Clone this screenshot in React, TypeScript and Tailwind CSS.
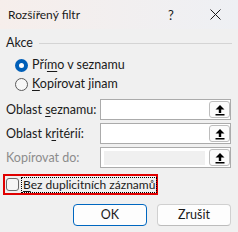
import React from "react";

function UpArrow() {
  return (
    <svg width="10" height="12" viewBox="0 0 10 12" className="block">
      <path d="M5 1 L9.5 5.5 L6.2 5.5 L6.2 9 L3.8 9 L3.8 5.5 L0.5 5.5 Z" fill="#000" />
      <rect x="0.5" y="10" width="9" height="1.5" fill="#000" />
    </svg>
  );
}

function RefField({ label, hot, rest, before, disabled }: { label?: string; before: string; hot: string; rest: string; disabled?: boolean }) {
  return (
    <div className="flex items-center h-[21px]">
      <div className={`w-[94px] whitespace-nowrap ${disabled ? "text-[#8c8c8c]" : "text-[#1a1a1a]"}`}>
        {label ? label : (
          <>
            {before}
            <span className="underline underline-offset-2">{hot}</span>
            {rest}
          </>
        )}
      </div>
      <div className="flex-1 h-full border border-[#ababab] bg-white flex items-center pl-[3px] mr-[1px]">
        <div className={`flex-1 h-[14px] mr-[4px] ${disabled ? "bg-[#f0f0f0]" : ""}`} />
        <div className="w-[21px] h-[17px] rounded-[3px] border border-[#bdbdbd] bg-[#fbfbfb] flex items-center justify-center">
          <UpArrow />
        </div>
      </div>
    </div>
  );
}

export default function App() {
  return (
    <div
      className="w-[238px] h-[232px] bg-[#f0f0f0] overflow-hidden text-[12.5px] leading-[16px] text-[#1a1a1a] flex flex-col"
      style={{ fontFamily: 'Lato, "Noto Sans", sans-serif' }}
    >
      <div className="h-[29px] flex items-center bg-gradient-to-r from-[#f6eeeb] to-[#eef0f4] pl-[8px]">
        <span className="flex-1 text-[12px]">Rozšířený filtr</span>
        <span className="w-[10px] text-center mr-[34px] text-[13px]">?</span>
        <svg width="11" height="11" viewBox="0 0 11 11" className="mr-[17px]">
          <path d="M0.5 0.5 L10.5 10.5 M10.5 0.5 L0.5 10.5" stroke="#1a1a1a" strokeWidth="1" />
        </svg>
      </div>

      <div className="px-[6px] flex flex-col">
        <div className="flex items-center h-[16px] mt-[6px]">
          <span>Akce</span>
          <div className="flex-1 h-px bg-[#d4d4d4] ml-[6px]" />
        </div>

        <div className="flex items-center h-[18px] mt-[5px] pl-[9px]">
          <div className="w-[13px] h-[13px] rounded-full bg-[#005fb8] flex items-center justify-center">
            <div className="w-[5px] h-[5px] rounded-full bg-white" />
          </div>
          <span className="ml-[4px]">
            Pří<span className="underline underline-offset-2">m</span>o v seznamu
          </span>
        </div>

        <div className="flex items-center h-[18px] mt-[1px] pl-[9px]">
          <div className="w-[13px] h-[13px] rounded-full border border-[#5a5a5a] bg-[#f7f7f7]" />
          <span className="ml-[4px]">
            <span className="underline underline-offset-2">K</span>opírovat jinam
          </span>
        </div>

        <div className="flex flex-col gap-[3px] mt-[6px]">
          <RefField before="Oblast " hot="s" rest="eznamu:" />
          <RefField before="Oblast k" hot="r" rest="itérií:" />
          <RefField label="Kopírovat do:" before="" hot="" rest="" disabled />
        </div>

        <div className="mt-[6px] -ml-[3px] w-[155px] h-[21px] border-2 border-[#e00000] flex items-center pl-[1px]">
          <div className="w-[13px] h-[13px] rounded-[3px] border border-[#6a6a6a] bg-[#f6f6f6] shrink-0" />
          <div className="ml-[2px] border border-dotted border-black h-[16px] flex items-center px-[1px] whitespace-nowrap text-[12px]">
            <span>
              <span className="underline underline-offset-2">B</span>ez duplicitních záznamů
            </span>
          </div>
        </div>

        <div className="flex justify-end gap-[10px] mt-[9px] pr-[1px]">
          <button className="w-[74px] h-[22px] rounded-[4px] border border-[#0067c0] bg-[#fdfdfd]">
            OK
          </button>
          <button className="w-[74px] h-[22px] rounded-[4px] border border-[#d0d0d0] border-b-[#bcbcbc] bg-[#fdfdfd]">
            Zrušit
          </button>
        </div>
      </div>
    </div>
  );
}
